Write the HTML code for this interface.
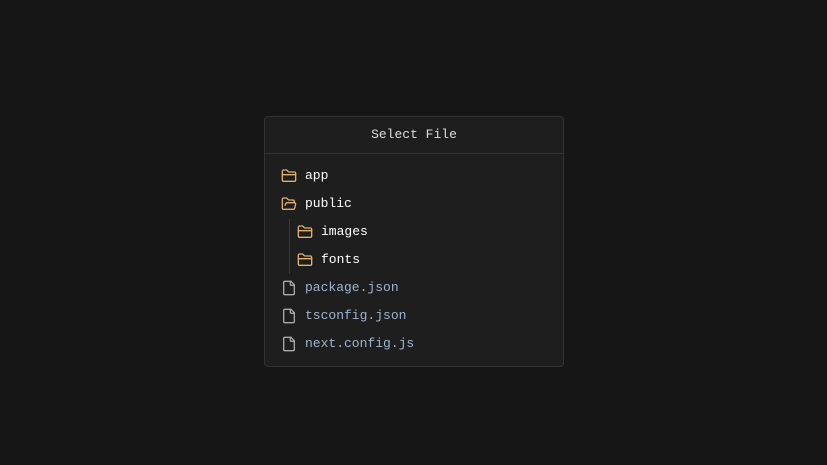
<!DOCTYPE html>
<html><head><style>
body{margin:0;width:827px;height:465px;background:#161616;font-family:"Liberation Mono",monospace;font-size:13px;position:relative;overflow:hidden}
.card{position:absolute;left:264px;top:116px;width:298px;height:249px;border:1px solid #333;border-radius:4px;background:#1e1e1e}
.hd{height:36px;border-bottom:1px solid #333;color:#ddd;text-align:center;line-height:36px}
.row{position:absolute;height:28px;line-height:28px;display:flex;align-items:center}
.row svg{width:16px;height:16px;margin-right:8px}
.f{color:#fff}.j{color:#9fb4cf}
.line{position:absolute;left:24px;top:102px;width:1px;height:55px;background:#3a3a3a}
</style></head><body>
<div class="card">
<div class="hd">Select File</div>
<div class="line"></div>
<div class="row f" style="left:16px;top:45px"><svg viewBox="0 0 24 24" fill="none" stroke="#e0b070" stroke-width="2" stroke-linecap="round" stroke-linejoin="round"><path d="M20 20a2 2 0 0 0 2-2V8a2 2 0 0 0-2-2h-7.9a2 2 0 0 1-1.69-.9L9.6 3.9A2 2 0 0 0 7.93 3H4a2 2 0 0 0-2 2v13a2 2 0 0 0 2 2Z"/><path d="M2 10h20"/></svg>app</div>
<div class="row f" style="left:16px;top:73px"><svg viewBox="0 0 24 24" fill="none" stroke="#e0b070" stroke-width="2" stroke-linecap="round" stroke-linejoin="round"><path d="m6 14 1.5-2.9A2 2 0 0 1 9.24 10H20a2 2 0 0 1 1.94 2.5l-1.54 6a2 2 0 0 1-1.95 1.5H4a2 2 0 0 1-2-2V5a2 2 0 0 1 2-2h3.9a2 2 0 0 1 1.69.9l.81 1.2a2 2 0 0 0 1.67.9H18a2 2 0 0 1 2 2v2"/></svg>public</div>
<div class="row f" style="left:32px;top:101px"><svg viewBox="0 0 24 24" fill="none" stroke="#e0b070" stroke-width="2" stroke-linecap="round" stroke-linejoin="round"><path d="M20 20a2 2 0 0 0 2-2V8a2 2 0 0 0-2-2h-7.9a2 2 0 0 1-1.69-.9L9.6 3.9A2 2 0 0 0 7.93 3H4a2 2 0 0 0-2 2v13a2 2 0 0 0 2 2Z"/><path d="M2 10h20"/></svg>images</div>
<div class="row f" style="left:32px;top:129px"><svg viewBox="0 0 24 24" fill="none" stroke="#e0b070" stroke-width="2" stroke-linecap="round" stroke-linejoin="round"><path d="M20 20a2 2 0 0 0 2-2V8a2 2 0 0 0-2-2h-7.9a2 2 0 0 1-1.69-.9L9.6 3.9A2 2 0 0 0 7.93 3H4a2 2 0 0 0-2 2v13a2 2 0 0 0 2 2Z"/><path d="M2 10h20"/></svg>fonts</div>
<div class="row j" style="left:16px;top:157px"><svg viewBox="0 0 24 24" fill="none" stroke="#aaa" stroke-width="2" stroke-linecap="round" stroke-linejoin="round"><path d="M15 2H6a2 2 0 0 0-2 2v16a2 2 0 0 0 2 2h12a2 2 0 0 0 2-2V7Z"/><path d="M14 2v4a2 2 0 0 0 2 2h4"/></svg>package.json</div>
<div class="row j" style="left:16px;top:185px"><svg viewBox="0 0 24 24" fill="none" stroke="#aaa" stroke-width="2" stroke-linecap="round" stroke-linejoin="round"><path d="M15 2H6a2 2 0 0 0-2 2v16a2 2 0 0 0 2 2h12a2 2 0 0 0 2-2V7Z"/><path d="M14 2v4a2 2 0 0 0 2 2h4"/></svg>tsconfig.json</div>
<div class="row j" style="left:16px;top:213px"><svg viewBox="0 0 24 24" fill="none" stroke="#aaa" stroke-width="2" stroke-linecap="round" stroke-linejoin="round"><path d="M15 2H6a2 2 0 0 0-2 2v16a2 2 0 0 0 2 2h12a2 2 0 0 0 2-2V7Z"/><path d="M14 2v4a2 2 0 0 0 2 2h4"/></svg>next.config.js</div>
</div>
</body></html>
